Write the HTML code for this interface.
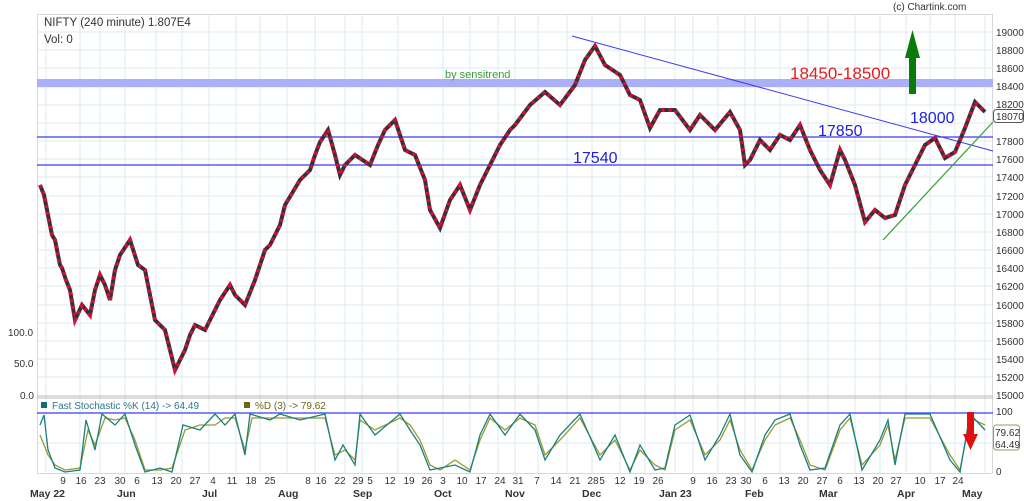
<!DOCTYPE html>
<html><head><meta charset="utf-8"><style>
html,body{margin:0;padding:0;background:#fff;width:1024px;height:501px;overflow:hidden}
svg text{font-family:"Liberation Sans",sans-serif}
</style></head><body>
<svg width="1024" height="501" viewBox="0 0 1024 501" xmlns="http://www.w3.org/2000/svg">
<rect width="1024" height="501" fill="#fff"/>
<g stroke="#dcebf2" stroke-width="1">
<path d="M37 32H993M37 50H993M37 68H993M37 87H993M37 105H993M37 123H993M37 141H993M37 159H993M37 177H993M37 196H993M37 214H993M37 232H993M37 250H993M37 268H993M37 286H993M37 305H993M37 323H993M37 341H993M37 359H993M37 377H993"/>
<path d="M46 14V473M80 14V473M100 14V473M125 14V473M156 14V473M182 14V473M209 14V473M236 14V473M260 14V473M287 14V473M315 14V473M345 14V473M362 14V473M398 14V473M443 14V473M470 14V473M498 14V473M515 14V473M538 14V473M567 14V473M592 14V473M620 14V473M645 14V473M675 14V473M693 14V473M718 14V473M745 14V473M755 14V473M780 14V473M808 14V473M828 14V473M855 14V473M880 14V473M906 14V473M930 14V473M955 14V473M985 14V473"/>
<path d="M37 443H993"/>
</g>
<rect x="37.5" y="14.5" width="955" height="459" fill="none" stroke="#d8d8d8"/>
<line x1="37" y1="396" x2="993" y2="396" stroke="#bbb"/>
<line x1="37" y1="398" x2="993" y2="398" stroke="#bbb"/>
<rect x="37" y="79" width="956" height="8" fill="#aab0f8"/>
<line x1="37" y1="137" x2="993" y2="137" stroke="#3a3af0" stroke-width="1.3"/>
<line x1="37" y1="165" x2="993" y2="165" stroke="#3a3af0" stroke-width="1.3"/>
<line x1="572" y1="36" x2="993" y2="151" stroke="#3a3af0" stroke-width="1"/>
<line x1="883" y1="240" x2="993" y2="122" stroke="#3aa03a" stroke-width="1.2"/>
<g id="p">
<polyline fill="none" stroke="#333" stroke-width="4" points="40,185 44,195 48,215 52,235 55,240 60,265 62,268 66,280 70,290 75,320 82,305 90,315 95,290 100,275 105,285 110,300 115,270 120,255 130,240 138,265 145,270 150,295 155,320 165,330 170,350 175,370 185,350 190,335 195,325 205,330 210,320 220,300 230,285 235,295 245,305 255,280 265,250 270,245 280,225 285,205 300,180 310,170 315,155 320,142 328,130 335,155 340,175 345,165 355,155 370,165 378,145 385,130 395,120 405,150 415,155 425,180 430,210 440,228 450,200 460,185 470,210 480,185 490,165 500,145 510,130 515,125 530,105 545,92 560,105 575,85 585,60 595,46 605,65 620,75 630,95 640,100 650,128 660,110 675,110 690,130 700,115 715,130 730,112 740,130 745,165 750,160 760,140 770,150 780,135 790,140 800,125 810,150 820,170 830,185 840,150 845,160 855,185 865,222 875,210 885,218 895,215 905,185 915,165 925,145 935,138 945,158 955,152 965,128 975,102 985,112"/>
<polyline fill="none" stroke="#d0103a" stroke-width="4" stroke-dasharray="3 4" points="40,185 44,195 48,215 52,235 55,240 60,265 62,268 66,280 70,290 75,320 82,305 90,315 95,290 100,275 105,285 110,300 115,270 120,255 130,240 138,265 145,270 150,295 155,320 165,330 170,350 175,370 185,350 190,335 195,325 205,330 210,320 220,300 230,285 235,295 245,305 255,280 265,250 270,245 280,225 285,205 300,180 310,170 315,155 320,142 328,130 335,155 340,175 345,165 355,155 370,165 378,145 385,130 395,120 405,150 415,155 425,180 430,210 440,228 450,200 460,185 470,210 480,185 490,165 500,145 510,130 515,125 530,105 545,92 560,105 575,85 585,60 595,46 605,65 620,75 630,95 640,100 650,128 660,110 675,110 690,130 700,115 715,130 730,112 740,130 745,165 750,160 760,140 770,150 780,135 790,140 800,125 810,150 820,170 830,185 840,150 845,160 855,185 865,222 875,210 885,218 895,215 905,185 915,165 925,145 935,138 945,158 955,152 965,128 975,102 985,112"/>
</g>
<line x1="37" y1="413" x2="993" y2="413" stroke="#3a3af0" stroke-width="1.3"/>
<polyline fill="none" stroke="#9a9a30" stroke-width="1.3" points="40,435 48,455 55,465 65,470 80,468 88,430 95,445 105,418 115,420 125,418 135,440 145,470 160,470 172,468 185,430 200,425 215,425 225,418 235,418 245,450 252,418 270,418 280,418 300,418 325,418 335,455 345,450 355,460 360,420 375,430 400,418 410,425 420,440 430,465 440,470 455,460 470,470 480,440 490,418 505,430 520,418 535,425 545,455 560,440 580,418 600,455 615,440 630,470 640,450 655,465 665,470 675,430 690,420 705,455 720,440 730,420 740,450 752,470 765,440 775,425 790,418 800,440 810,465 825,470 840,430 850,418 862,465 880,445 888,425 895,460 905,418 930,418 950,455 960,470 970,418 985,425"/>
<polyline fill="none" stroke="#1a8080" stroke-width="1.3" points="40,425 44,415 48,450 55,468 65,472 80,470 86,420 95,450 102,414 115,425 125,414 135,445 145,472 160,468 172,472 183,425 200,430 215,414 225,425 235,414 245,455 250,414 270,420 280,414 300,420 325,414 335,460 343,445 355,465 360,414 375,435 400,414 410,430 420,445 430,470 440,468 455,465 470,472 480,435 490,414 505,435 520,414 535,430 545,460 560,435 580,414 600,460 615,435 630,472 640,445 655,470 665,468 675,425 690,415 705,460 720,435 730,414 740,455 752,472 765,435 775,420 790,414 800,445 810,470 825,468 840,425 850,414 862,470 880,440 888,420 895,465 905,414 930,414 950,460 960,472 970,414 985,430"/>
<rect x="909" y="58" width="7" height="36" fill="#0a7a0a"/><polygon points="905,58 920,58 912.5,30" fill="#0a7a0a"/>
<rect x="967" y="412" width="7" height="22" fill="#e01010"/><polygon points="963,434 978,434 970.5,450" fill="#e01010"/>
<text x="44" y="26" font-size="11.5" fill="#333">NIFTY (240 minute) 1.807E4</text>
<text x="44" y="43" font-size="11.5" fill="#333">Vol: 0</text>
<text x="893" y="10" font-size="10" fill="#333">(c) Chartink.com</text>
<text x="445" y="78" font-size="11" fill="#3a9a3a">by sensitrend</text>
<text x="790" y="79" font-size="17" fill="#e02020">18450-18500</text>
<text x="910" y="123" font-size="16" fill="#2020e0">18000</text>
<text x="818" y="136" font-size="16" fill="#2020e0">17850</text>
<text x="573" y="163" font-size="16" fill="#2020e0">17540</text>
<g font-size="10" fill="#333">
<text x="996" y="36">19000</text><text x="996" y="54">18800</text><text x="996" y="72">18600</text><text x="996" y="90">18400</text><text x="996" y="108">18200</text><text x="996" y="145">17800</text><text x="996" y="163">17600</text><text x="996" y="181">17400</text><text x="996" y="200">17200</text><text x="996" y="218">17000</text><text x="996" y="236">16800</text><text x="996" y="254">16600</text><text x="996" y="272">16400</text><text x="996" y="290">16200</text><text x="996" y="309">16000</text><text x="996" y="327">15800</text><text x="996" y="345">15600</text><text x="996" y="363">15400</text><text x="996" y="381">15200</text>
<text x="996" y="399">15000</text><text x="996" y="415">100</text><text x="996" y="475">0</text>
<text x="8" y="336">100.0</text><text x="14" y="367">50.0</text><text x="20" y="399">0.0</text>
</g>
<rect x="993.5" y="109.5" width="30" height="13" rx="3" fill="#fff" stroke="#555"/>
<text x="996" y="120" font-size="10" fill="#333">18070</text>
<rect x="993.5" y="425" width="26" height="25" rx="3" fill="#fff" stroke="#999960"/>
<text x="995" y="436" font-size="10" fill="#333">79.62</text><text x="995" y="448" font-size="10" fill="#333">64.49</text>
<rect x="41" y="402" width="6" height="6" fill="#1a6a6a"/>
<text x="52" y="409" font-size="10" fill="#2a7a8a">Fast Stochastic %K (14) -&gt; 64.49</text>
<rect x="244" y="402" width="6" height="6" fill="#6a6a10"/>
<text x="255" y="409" font-size="10" fill="#6a6a10">%D (3) -&gt; 79.62</text>
<g font-size="10" fill="#333" text-anchor="middle">
<text x="63" y="484">9</text><text x="81" y="484">16</text><text x="100" y="484">23</text><text x="120" y="484">30</text><text x="137" y="484">6</text><text x="157" y="484">13</text><text x="176" y="484">20</text><text x="195" y="484">27</text><text x="213" y="484">4</text><text x="232" y="484">11</text><text x="251" y="484">18</text><text x="270" y="484">25</text><text x="308" y="484">8</text><text x="321" y="484">16</text><text x="340" y="484">22</text><text x="358" y="484">29</text><text x="370" y="484">5</text><text x="390" y="484">12</text><text x="409" y="484">19</text><text x="427" y="484">26</text><text x="443" y="484">3</text><text x="462" y="484">10</text><text x="481" y="484">17</text><text x="500" y="484">24</text><text x="518" y="484">31</text><text x="537" y="484">7</text><text x="556" y="484">14</text><text x="575" y="484">21</text><text x="593" y="484">28</text><text x="602" y="484">5</text><text x="620" y="484">12</text><text x="639" y="484">19</text><text x="658" y="484">26</text><text x="693" y="484">9</text><text x="712" y="484">16</text><text x="731" y="484">23</text><text x="746" y="484">30</text><text x="765" y="484">6</text><text x="784" y="484">13</text><text x="803" y="484">20</text><text x="822" y="484">27</text><text x="840" y="484">6</text><text x="859" y="484">13</text><text x="878" y="484">20</text><text x="896" y="484">27</text><text x="920" y="484">10</text><text x="940" y="484">17</text><text x="958" y="484">24</text>
</g>
<g font-size="10.5" font-weight="bold" fill="#333">
<text x="30" y="497">May 22</text><text x="117" y="497">Jun</text><text x="202" y="497">Jul</text><text x="278" y="497">Aug</text><text x="353" y="497">Sep</text><text x="434" y="497">Oct</text><text x="505" y="497">Nov</text><text x="582" y="497">Dec</text><text x="659" y="497">Jan 23</text><text x="745" y="497">Feb</text><text x="819" y="497">Mar</text><text x="897" y="497">Apr</text><text x="962" y="497">May</text>
</g>
</svg>
</body></html>
